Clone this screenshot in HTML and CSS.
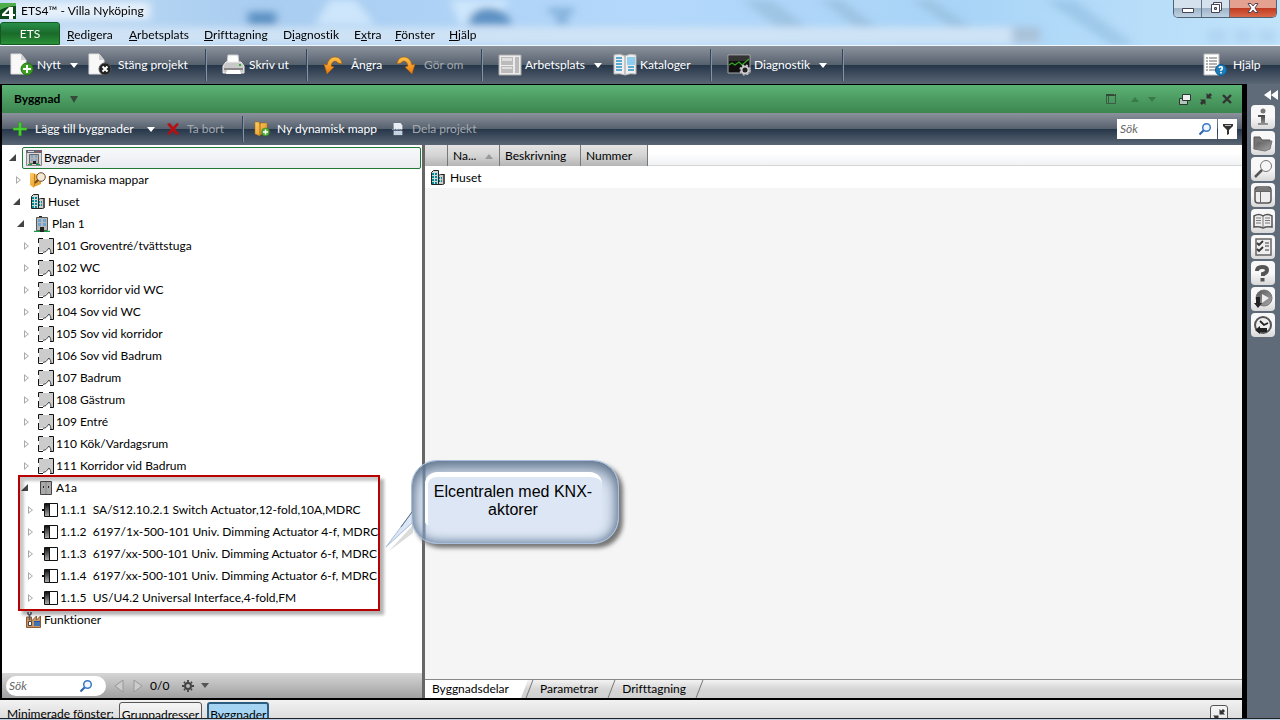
FILE: index.html
```html
<!DOCTYPE html>
<html lang="sv">
<head>
<meta charset="utf-8">
<title>ETS4™ - Villa Nyköping</title>
<link rel="stylesheet" href="styles.css">
</head>
<body>
<svg class="defs" aria-hidden="true">
  <defs>
    <linearGradient id="gOrange" x1="0" y1="0" x2="0" y2="1"><stop offset="0" stop-color="#ffc54a"/><stop offset="1" stop-color="#e8790c"/></linearGradient>
    <linearGradient id="gDark" x1="0" y1="0" x2="0" y2="1"><stop offset="0" stop-color="#444"/><stop offset="1" stop-color="#999"/></linearGradient>
    <linearGradient id="gSteel" x1="0" y1="0" x2="1" y2="1"><stop offset="0" stop-color="#555"/><stop offset="1" stop-color="#aaa"/></linearGradient>
    <linearGradient id="gDevice" x1="0" y1="0" x2="0" y2="1"><stop offset="0" stop-color="#111"/><stop offset="1" stop-color="#aaa"/></linearGradient>
    <linearGradient id="gFolder" x1="0" y1="0" x2="1" y2="1"><stop offset="0" stop-color="#ffcb66"/><stop offset="1" stop-color="#df941c"/></linearGradient>
  </defs>
  <symbol id="logo" viewBox="0 0 16 16"><path fill="#0b4a1c" d="M0 0h16v16H0z"/><path fill="#4fae4c" d="M0 0h16v3Q7 3 0 7z"/><path fill="#fff" fill-rule="evenodd" d="M9 4h4v7h2v2h-2v3H9v-3H2v-2zM9 7l-4 4h4z"/></symbol>
  <symbol id="page-add" viewBox="0 0 24 24"><path fill="#f8f8f8" stroke="#ddd" d="M1 1h10l5 6v14H1z"/><path fill="#cfcfcf" d="M11 1v6h5z"/><circle cx="17" cy="16" r="6" fill="#3c9f22" stroke="#267513"/><path stroke="#fff" stroke-width="2" d="M17 12v8M13 16h8"/></symbol>
  <symbol id="page-close" viewBox="0 0 24 24"><path fill="#f8f8f8" stroke="#ddd" d="M1 1h10l5 6v14H1z"/><path fill="#cfcfcf" d="M11 1v6h5z"/><circle cx="17" cy="16" r="6" fill="#222" stroke="#555"/><path stroke="#fff" stroke-width="2" d="M14.500 13.500l5 5M19.500 13.500l-5 5"/></symbol>
  <symbol id="printer" viewBox="0 0 24 24"><path fill="#fff" stroke="#ccc" d="M6 2h10l1 8H5z"/><path fill="#c9c9c9" stroke="#eee" d="M4 9h15l3 4v7H1v-7z"/><path fill="#888" d="M2 15h19v2H2z"/><path fill="#fff" d="M5 17h13l1 4H4z"/><path fill="#2fae2f" d="M17 11h2v2h-2z"/></symbol>
  <symbol id="undo" viewBox="0 0 20 20"><path fill="url(#gOrange)" stroke="#a85a08" stroke-width=".6" d="M1 9l3 1Q6 2 12 2q6 0 7 7l-4-1q-1-2-3-2-3 0-4 5l3 1-7 7z"/></symbol>
  <symbol id="redo" viewBox="0 0 20 20"><path fill="url(#gOrange)" stroke="#a85a08" stroke-width=".6" d="M19 9l-3 1Q14 2 8 2 2 2 1 9l4-1q1-2 3-2 3 0 4 5l-3 1 7 7z"/></symbol>
  <symbol id="workspace" viewBox="0 0 24 24"><path fill="#ececec" stroke="#aaa" d="M1 2h22v20H1z"/><path fill="#bbb" d="M3 4h12v8H3zM3 13h12v7H3zM17 4h4v16h-4z"/><path fill="#ddd" d="M4 5h10v3H4zM4 14h10v2H4z"/></symbol>
  <symbol id="catalog" viewBox="0 0 24 24"><path fill="#eee" stroke="#bbb" d="M1 2q6-2 11 1 5-3 11-1v19q-6-1-11 1-5-2-11-1z"/><path fill="none" stroke="#2a93c8" stroke-width="1.500" d="M3 5h6M3 8h6M3 11h6M3 14h6M3 17h6M15 14h6M15 17h6"/><path fill="#8ccdf0" d="M14 4h8v8h-8z"/><path stroke="#999" d="M12 3v18"/></symbol>
  <symbol id="diagnostic" viewBox="0 0 24 24"><path fill="#111" stroke="#aaa" d="M1 2h22v18H1z"/><path fill="#333" d="M2 3h20v5H2z"/><path fill="none" stroke="#36a824" stroke-width="1.200" d="M2 12l3-2 3 2 4-3 3 3 7-6"/><circle cx="18" cy="17" r="3.500" fill="#222" stroke="#ccc" stroke-width="2"/><circle cx="18" cy="17" r="5" fill="none" stroke="#ccc" stroke-width="1.200" stroke-dasharray="2 2"/></symbol>
  <symbol id="help" viewBox="0 0 24 24"><path fill="#fff" stroke="#bbb" d="M1 1h15v21H1z"/><path stroke="#999" stroke-width="1.500" stroke-dasharray="2 1 8" d="M3 5h11M3 8h11M3 11h11M3 14h11M3 17h11"/><circle cx="18" cy="17" r="5.500" fill="#1c7dbb" stroke="#0e5b92"/><path fill="none" stroke="#fff" stroke-width="1.500" d="M16 15q1-2 3-1 1 2-1 3v1M18 19v1.500"/></symbol>
  <symbol id="plus" viewBox="0 0 14 14"><path fill="#48d030" stroke="#2c8f1e" stroke-width=".4" d="M5.800 1h2.400v4.800H13v2.400H8.200V13H5.800V8.200H1V5.800h4.800z"/></symbol>
  <symbol id="red-x" viewBox="0 0 14 14"><path fill="#b80f12" d="M1 2l3-1 3 4 4-4 2 1-4 5 4 5-3 1-3-4-4 4-2-1 4-5z"/></symbol>
  <symbol id="folder-add" viewBox="0 0 16 16"><path fill="url(#gFolder)" stroke="#a36a10" stroke-width=".5" d="M1 1h4l1 2V2h7v9l-7 3v1l-5-2z"/><path stroke="#a36a10" d="M6 2v12"/><circle cx="11.500" cy="11" r="4" fill="#54ad35" stroke="#28731a" stroke-width=".5"/><path stroke="#fff" stroke-width="1.500" d="M11.500 8.500v5M9 11h5"/></symbol>
  <symbol id="split" viewBox="0 0 14 16"><path fill="#e9eef5" d="M2 1h8l2 3v4H2z"/><path fill="#c8d3e2" d="M2 10h10v5H2z"/><path fill="none" stroke="#b0bed0" d="M0 8l2 1 2-1 2 1 2-1 2 1 2-1"/></symbol>
  <symbol id="building" viewBox="0 0 16 16"><path fill="#b8b8b8" stroke="#555" d="M2.500 1.500h11v13h-11z"/><path fill="#6aa5d5" d="M4 3h3v3H4zM9 3h3v3H9zM4 7h3v3H4zM9 7h3v3H9z"/><path fill="#222" d="M6 11h4v5H6zM5 0h3v1H5z"/><path stroke="#15a045" stroke-width="1.200" d="M0 15.400h6M10 15.400h6"/></symbol>
  <symbol id="building-window" viewBox="0 0 16 16"><path fill="#d9d9d9" stroke="#888" d="M.5.500h15v15H.5z"/><path fill="#667" d="M0 0h16v3H0z"/><path fill="#d33" d="M13 1h2v1h-2z"/><path fill="#ddd" d="M2 1h6v1H2z"/><path fill="#b5b5b5" stroke="#666" d="M3.500 4.500h9v9h-9z"/><path fill="#7ea9cc" d="M5 5h2v3H5zM9 5h2v3H9zM5 9h2v2H5zM9 9h2v2H9z"/><path fill="#222" d="M7 11h3v3H7z"/><path stroke="#15a045" d="M2 14.500h4M10 14.500h4"/></symbol>
  <symbol id="folder-search" viewBox="0 0 16 16"><path fill="url(#gFolder)" d="M0 1h4l1 1h6v10l-7 3v1l-4-3z"/><path stroke="#c47f14" d="M4.500 2v12"/><circle cx="11" cy="5" r="4.300" fill="#f5ead6" stroke="#704b2b"/><path stroke="#704b2b" stroke-width="2" d="M8 8l-3 3"/></symbol>
  <symbol id="city" viewBox="0 0 16 16"><path fill="#d0d8d8" stroke="#222" d="M1.500 2.500l2-2h5v14h-7z"/><path fill="#ccc" stroke="#222" d="M8.500 5.500l2-1h4v9l-2 1h-4z"/><path fill="#555" d="M13 5h2v8l-2 2z"/><path fill="#078a94" d="M2 3h2v2H2zM5 3h2v2H5zM2 6h2v2H2zM5 6h2v2H5zM2 9h2v2H2zM5 9h2v2H5zM2 12h2v2H2zM5 12h2v2H5zM9 7h1v2H9zM11 7h1v2h-1zM9 10h1v2H9zM11 10h1v2h-1z"/></symbol>
  <symbol id="room" viewBox="0 0 16 16"><path fill="#ccc" d="M1 1h14v14h-2q0-3-2-5L6 14H1z"/><path fill="none" stroke="#111" d="M5 .5H.500V5M.5 9v6.500H5M11 .5h4.500v15H12"/><path fill="none" stroke="#444" d="M5 14.500l3-1 3-3.500q2 2 2 5"/></symbol>
  <symbol id="cabinet" viewBox="0 0 16 16"><path fill="#aaa" stroke="#444" d="M2.500 1.500h11v13h-11z"/><path stroke="#888" d="M8 2v12"/><path fill="#222" d="M5 6h1v2H5zM10 6h1v2h-1z"/></symbol>
  <symbol id="device" viewBox="0 0 16 16"><path fill="#fff" stroke="#111" d="M2.500 1.500h13v13h-13z"/><path fill="url(#gDevice)" d="M3 2h4v12H3z"/><path fill="#111" d="M7 2h1v12H7zM0 7h3v2H0z"/></symbol>
  <symbol id="factory" viewBox="0 0 16 16"><path fill="#c99562" stroke="#8b5c35" d="M.5 15.500V5h5v4l5-5v4l4-4v11.500z"/><path fill="none" stroke="#556" stroke-width="1.500" d="M2 0v2q2 2 3 0V0M3.500 3v5"/><path fill="#fff" stroke="#444" d="M2.500 9.500h3v4h-3z"/><path fill="#1c56a8" d="M8 9h6v5H8z"/><path stroke="#9bc" stroke-width=".6" d="M8 11h6M8 13h6"/></symbol>
  <symbol id="lens" viewBox="0 0 14 14"><circle cx="8.500" cy="5.500" r="3.800" fill="#f2f7ff" stroke="#3978c5" stroke-width="1.500"/><path stroke="#2c61ab" stroke-width="2" d="M5.500 8.500L1.500 12.500"/></symbol>
  <symbol id="funnel" viewBox="0 0 14 14"><path fill="#333" d="M2 2h10v2L8 8v4l-2 1V8L2 4z"/><path fill="#bbb" d="M4 3h6v1H4z"/></symbol>
  <symbol id="gear" viewBox="0 0 14 14"><circle cx="7" cy="7" r="3" fill="none" stroke="#444" stroke-width="2"/><path stroke="#444" stroke-width="1.800" d="M7 1v2M7 11v2M1 7h2M11 7h2M3 3l1 1M10 10l1 1M11 3l-1 1M4 10l-1 1"/></symbol>
  <symbol id="panel" viewBox="0 0 12 12"><path fill="none" stroke="#3d5c46" d="M1.500 1.500h9v9h-9zM3.500 3v7"/><path fill="#304a38" d="M1 1h10v2H1z"/><path fill="#b55" d="M9 1h1v1H9z"/></symbol>
  <symbol id="restore" viewBox="0 0 12 12"><path fill="#b6c5b9" stroke="#2a3a2e" d="M.5 5.500h8v6h-8z"/><path fill="#eee" stroke="#2a3a2e" d="M3.500 1.500h8v6h-8z"/></symbol>
  <symbol id="shrink" viewBox="0 0 12 12"><path fill="#333" d="M6.500 0v5.500H12L10.300 3.800 12 2 10 0 8.200 1.700zM5.500 12V6.500H0l1.700 1.700L0 10l2 2 1.800-1.700z"/></symbol>
  <symbol id="cross" viewBox="0 0 12 12"><path stroke="#333" stroke-width="2.400" d="M2 2l8 8M10 2l-8 8"/></symbol>
  <symbol id="info" viewBox="0 0 20 20"><circle cx="10" cy="4" r="2.500" fill="#777"/><path fill="url(#gDark)" d="M5 8h7v8h3v2H5v-2h3v-6H5z"/></symbol>
  <symbol id="folder" viewBox="0 0 20 20"><path fill="#777" stroke="#555" d="M1 16V4h6l2 3h8v2"/><path fill="url(#gSteel)" stroke="#777" d="M1 16l3-7 15-1-2 8-5 2z"/></symbol>
  <symbol id="magnifier" viewBox="0 0 20 20"><circle cx="13" cy="7" r="5.500" fill="#f6f6f6" stroke="#777"/><path stroke="#555" stroke-width="2.500" d="M9 11l-7 7"/></symbol>
  <symbol id="window" viewBox="0 0 20 20"><rect x="2" y="2" width="16" height="16" rx="3" fill="#eee" stroke="#555" stroke-width="1.500"/><path fill="#777" d="M3 3h14v3H3z"/><path stroke="#666" d="M7.500 6v12M2 6.500h16"/></symbol>
  <symbol id="book" viewBox="0 0 20 20"><path fill="#eee" stroke="#555" stroke-width="1.500" d="M1 5q5-3 9 0 4-3 9 0v11q-5-1-9 1-4-2-9-1z"/><path stroke="#777" d="M10 5v12M3 7h5M3 9.500h5M3 12h5M12 7h5M12 9.500h5M12 12h5"/></symbol>
  <symbol id="checklist" viewBox="0 0 20 20"><path fill="#eee" stroke="#666" stroke-width="1.500" d="M3 2h15v16H3z"/><path fill="none" stroke="#333" stroke-width="1.800" d="M4 6l2 2 4-4M4 12l2 2 4-4"/><path stroke="#777" stroke-width="1.500" d="M12 6h4M12 9h4M12 13h4"/></symbol>
  <symbol id="question" viewBox="0 0 20 20"><path fill="none" stroke="#555" stroke-width="4" d="M4 8q0-4 5-4t5 3q0 3-4 4v2M9.500 15v3.500"/></symbol>
  <symbol id="play-down" viewBox="0 0 20 20"><circle cx="11" cy="9" r="8" fill="url(#gSteel)" stroke="#777"/><path fill="#eee" d="M9 5l7 4-7 5z"/><path fill="#222" d="M3 8h4v6h2l-4 5-4-5h2z"/></symbol>
  <symbol id="history" viewBox="0 0 20 20"><circle cx="10" cy="10" r="8" fill="#eee" stroke="#555" stroke-width="2"/><path fill="none" stroke="#222" stroke-width="1.800" d="M7 6l4 4 4-2"/><path fill="#222" d="M2 15l5-4v2h7v4H7v2z"/></symbol>
</svg>

<header class="glass">
  <svg class="glass-art" viewBox="0 0 1280 46" preserveAspectRatio="none" aria-hidden="true">
    <defs><filter id="soft"><feGaussianBlur stdDeviation="4"/></filter></defs>
    <g filter="url(#soft)">
      <path fill="#8fb3cf" opacity=".5" d="M742 0h30l36 28h-30zM820 0h22l36 28h-22zM912 0h20l40 28h-20z"/>
      <path fill="#8cb8dc" opacity=".5" d="M1045 0h30l60 46h-24z"/>
      <path fill="#dcefff" opacity=".7" d="M330 0h25l20 25h-60zM450 0h60l-20 25h-30z"/>
      <path fill="#5f93c4" d="M248 12h28v14h-28zM468 26q2-18 20-18t24 18z"/>
      <path fill="#86b2dc" d="M548 8h26v6h-26zM556 14h12v12h-12z"/>
      <path fill="#d3e4f5" opacity=".9" d="M60 28h980v18H60z"/>
      <path fill="#a9c2da" d="M1012 28h28v16h-28z"/>
      <path fill="#a9cdee" d="M1208 30h18v14h-18zM1234 30h18v14h-18zM1258 30h18v14h-18z" opacity=".6"/>
      <path fill="#e5f0fa" d="M10 2h140v18H10z"/>
    </g>
  </svg>
  <div class="titlebar">
    <svg class="i16"><use href="#logo"/></svg>
    <h1 class="title">ETS4™ - Villa Nyköping</h1>
    <div class="win-buttons">
      <button class="win" aria-label="Minimera"><svg viewBox="0 0 16 16" class="i16"><path fill="#fff" stroke="#445" d="M2.500 8.500h11v4h-11z"/></svg></button>
      <button class="win" aria-label="Återställ"><svg viewBox="0 0 16 16" class="i16"><path fill="#fff" stroke="#445" d="M5.500 2.500h8v8h-8z"/><path fill="#fff" stroke="#445" d="M3.500 4.500h8v8h-8z"/><path fill="#9bb" stroke="#445" d="M6.500 7.500h2v2h-2z"/></svg></button>
      <button class="win win-close" aria-label="Stäng"><svg viewBox="0 0 16 16" class="i16"><path fill="#fff" stroke="#545" d="M3 3.500h3l2 2.500 2-2.500h3L10 8l3 4.500h-3L8 10l-2 2.500H3L6 8z"/></svg></button>
    </div>
  </div>
  <nav class="menubar">
    <button class="ets">ETS</button>
    <button><u>R</u>edigera</button>
    <button><u>A</u>rbetsplats</button>
    <button><u>D</u>rifttagning</button>
    <button>D<u>i</u>agnostik</button>
    <button>E<u>x</u>tra</button>
    <button><u>F</u>önster</button>
    <button><u>H</u>jälp</button>
  </nav>
</header>

<div class="toolbar main-toolbar">
  <button><svg class="i24"><use href="#page-add"/></svg>Nytt<i class="drop"></i></button>
  <button><svg class="i24"><use href="#page-close"/></svg>Stäng projekt</button>
  <button class="ruled"><svg class="i24"><use href="#printer"/></svg>Skriv ut</button>
  <button class="ruled"><svg class="i20"><use href="#undo"/></svg>Ångra</button>
  <button class="off"><svg class="i20"><use href="#redo"/></svg>Gör om</button>
  <button class="ruled tight"><svg class="i24"><use href="#workspace"/></svg>Arbetsplats<i class="drop"></i></button>
  <button><svg class="i24"><use href="#catalog"/></svg>Kataloger</button>
  <button class="ruled tight"><svg class="i24"><use href="#diagnostic"/></svg>Diagnostik<i class="drop"></i></button>
  <span class="ruled"></span>
  <button><svg class="i24"><use href="#help"/></svg>Hjälp</button>
</div>

<div class="body">
  <main class="workspace">
    <section class="window">
      <header class="window-head">
        <h2>Byggnad</h2><i class="drop dark"></i>
        <div class="head-tools">
          <svg class="i12"><use href="#panel"/></svg>
          <i class="up faint"></i><i class="drop faint"></i>
          <button aria-label="Lösgör"><svg class="i12"><use href="#restore"/></svg></button>
          <button aria-label="Minimera"><svg class="i12"><use href="#shrink"/></svg></button>
          <button aria-label="Stäng"><svg class="i12"><use href="#cross"/></svg></button>
        </div>
      </header>
      <div class="toolbar sub-toolbar">
        <button><svg class="i16"><use href="#plus"/></svg>Lägg till byggnader<i class="drop"></i></button>
        <button class="off"><svg class="i14"><use href="#red-x"/></svg>Ta bort</button>
        <button class="ruled"><svg class="i16"><use href="#folder-add"/></svg>Ny dynamisk mapp</button>
        <button class="off"><svg class="i14"><use href="#split"/></svg>Dela projekt</button>
        <div class="filter">
          <label class="search"><input type="text" placeholder="Sök" aria-label="Sök"><svg class="i14"><use href="#lens"/></svg></label>
          <button class="funnel" aria-label="Filter"><svg class="i14"><use href="#funnel"/></svg></button>
        </div>
      </div>
      <div class="panes">
        <div class="left">
          <ul class="tree">
            <li>
              <div class="row"><i class="open"></i><span class="label selected"><svg class="i16"><use href="#building-window"/></svg>Byggnader</span></div>
              <ul>
                <li><div class="row"><i class="shut"></i><span class="label"><svg class="i16"><use href="#folder-search"/></svg>Dynamiska mappar</span></div></li>
                <li>
                  <div class="row"><i class="open"></i><span class="label"><svg class="i16"><use href="#city"/></svg>Huset</span></div>
                  <ul>
                    <li>
                      <div class="row"><i class="open"></i><span class="label"><svg class="i16"><use href="#building"/></svg>Plan 1</span></div>
                      <ul>
                        <li><div class="row"><i class="shut"></i><span class="label"><svg class="i16"><use href="#room"/></svg>101 Groventré/tvättstuga</span></div></li>
                        <li><div class="row"><i class="shut"></i><span class="label"><svg class="i16"><use href="#room"/></svg>102 WC</span></div></li>
                        <li><div class="row"><i class="shut"></i><span class="label"><svg class="i16"><use href="#room"/></svg>103 korridor vid WC</span></div></li>
                        <li><div class="row"><i class="shut"></i><span class="label"><svg class="i16"><use href="#room"/></svg>104 Sov vid WC</span></div></li>
                        <li><div class="row"><i class="shut"></i><span class="label"><svg class="i16"><use href="#room"/></svg>105 Sov vid korridor</span></div></li>
                        <li><div class="row"><i class="shut"></i><span class="label"><svg class="i16"><use href="#room"/></svg>106 Sov vid Badrum</span></div></li>
                        <li><div class="row"><i class="shut"></i><span class="label"><svg class="i16"><use href="#room"/></svg>107 Badrum</span></div></li>
                        <li><div class="row"><i class="shut"></i><span class="label"><svg class="i16"><use href="#room"/></svg>108 Gästrum</span></div></li>
                        <li><div class="row"><i class="shut"></i><span class="label"><svg class="i16"><use href="#room"/></svg>109 Entré</span></div></li>
                        <li><div class="row"><i class="shut"></i><span class="label"><svg class="i16"><use href="#room"/></svg>110 Kök/Vardagsrum</span></div></li>
                        <li><div class="row"><i class="shut"></i><span class="label"><svg class="i16"><use href="#room"/></svg>111 Korridor vid Badrum</span></div></li>
                        <li class="marked">
                          <div class="row"><i class="open"></i><span class="label"><svg class="i16"><use href="#cabinet"/></svg>A1a</span></div>
                          <ul>
                            <li><div class="row"><i class="shut"></i><span class="label"><svg class="i16"><use href="#device"/></svg>1.1.1&nbsp; SA/S12.10.2.1 Switch Actuator,12-fold,10A,MDRC</span></div></li>
                            <li><div class="row"><i class="shut"></i><span class="label"><svg class="i16"><use href="#device"/></svg>1.1.2&nbsp; 6197/1x-500-101 Univ. Dimming Actuator 4-f, MDRC</span></div></li>
                            <li><div class="row"><i class="shut"></i><span class="label"><svg class="i16"><use href="#device"/></svg>1.1.3&nbsp; 6197/xx-500-101 Univ. Dimming Actuator 6-f, MDRC</span></div></li>
                            <li><div class="row"><i class="shut"></i><span class="label"><svg class="i16"><use href="#device"/></svg>1.1.4&nbsp; 6197/xx-500-101 Univ. Dimming Actuator 6-f, MDRC</span></div></li>
                            <li><div class="row"><i class="shut"></i><span class="label"><svg class="i16"><use href="#device"/></svg>1.1.5&nbsp; US/U4.2 Universal Interface,4-fold,FM</span></div></li>
                          </ul>
                        </li>
                      </ul>
                    </li>
                  </ul>
                </li>
              </ul>
            </li>
            <li><div class="row"><i></i><span class="label"><svg class="i16"><use href="#factory"/></svg>Funktioner</span></div></li>
          </ul>
          <div class="find">
            <label class="search round"><input type="text" placeholder="Sök" aria-label="Sök i trädet"><svg class="i14"><use href="#lens"/></svg></label>
            <button aria-label="Föregående"><svg class="i14" viewBox="0 0 14 14"><path fill="#ccc" stroke="#999" d="M11 1v12L3 7z"/></svg></button>
            <button aria-label="Nästa"><svg class="i14" viewBox="0 0 14 14"><path fill="#ccc" stroke="#999" d="M3 1v12l8-6z"/></svg></button>
            <span class="count">0/0</span>
            <button class="options" aria-label="Alternativ"><svg class="i14"><use href="#gear"/></svg><i class="drop grey"></i></button>
          </div>
        </div>
        <div class="right">
          <table>
            <thead><tr><th class="c-icon"></th><th class="c-name">Na...<i class="up sort"></i></th><th class="c-desc">Beskrivning</th><th class="c-num">Nummer</th><th class="c-rest"></th></tr></thead>
            <tbody><tr><td colspan="5"><span class="cell"><svg class="i16"><use href="#city"/></svg>Huset</span></td></tr></tbody>
          </table>
          <div class="tabs">
            <button class="tab active">Byggnadsdelar</button>
            <button class="tab">Parametrar</button>
            <button class="tab">Drifttagning</button>
          </div>
        </div>
        <div class="callout">
          <svg class="tail" viewBox="0 0 28 40" aria-hidden="true"><path fill="#888" opacity=".3" d="M4 40L28 14v8z"/><path fill="#dce6f4" stroke="#a9bedb" d="M1 36L27 1v11z"/><path stroke="#5b7088" d="M16 16L27 1"/></svg>
          <p>Elcentralen med KNX-aktorer</p>
        </div>
      </div>
    </section>
    <footer class="minimized">
      <span>Minimerade fönster:</span>
      <button>Gruppadresser</button>
      <button class="current">Byggnader</button>
      <button class="collapse" aria-label="Minimera alla"><svg class="i12"><use href="#shrink"/></svg></button>
    </footer>
  </main>
  <aside class="sidebar">
    <button class="expand" aria-label="Visa"><svg class="i14" viewBox="0 0 14 14"><path fill="#fff" d="M7 2v10L0 7zM14 2v10L7 7z"/></svg></button>
    <button aria-label="Information"><svg class="i20"><use href="#info"/></svg></button>
    <button aria-label="Mapp"><svg class="i20"><use href="#folder"/></svg></button>
    <button aria-label="Sök"><svg class="i20"><use href="#magnifier"/></svg></button>
    <button aria-label="Arbetsytor"><svg class="i20"><use href="#window"/></svg></button>
    <button aria-label="Katalog"><svg class="i20"><use href="#book"/></svg></button>
    <button aria-label="Att göra"><svg class="i20"><use href="#checklist"/></svg></button>
    <button aria-label="Hjälp"><svg class="i20"><use href="#question"/></svg></button>
    <button aria-label="Pågående"><svg class="i20"><use href="#play-down"/></svg></button>
    <button aria-label="Historik"><svg class="i20"><use href="#history"/></svg></button>
  </aside>
</div>
<div class="desk-edge"></div>
</body>
</html>
```
FILE: styles.css
```css
*, *::before, *::after { box-sizing: border-box; }
body {
  margin: 0;
  height: 100vh;
  display: flex;
  flex-direction: column;
  overflow: hidden;
  background: #5f6b78;
  color: #000;
  font: 12px/16px Lato, "Open Sans", sans-serif;
  font-variant-ligatures: none;
  white-space: nowrap;
}
button, input { font: inherit; color: inherit; font-variant-ligatures: none; }
button { margin: 0; padding: 0; border: 0; background: none; }
h1, h2, p, ul { margin: 0; padding: 0; font: inherit; font-variant-ligatures: none; list-style: none; }
svg { display: block; flex: none; }
.defs { position: absolute; width: 0; height: 0; }
.i12 { width: 12px; height: 12px; }
.i14 { width: 14px; height: 14px; }
.i16 { width: 16px; height: 16px; }
.i20 { width: 20px; height: 20px; }
.i24 { width: 24px; height: 24px; }

.drop, .up { border: 4px solid transparent; flex: none; }
.drop { border-top: 5px solid #fff; border-bottom: 0; }
.up { border-bottom: 5px solid #999; border-top: 0; }
.drop.dark { border-top: 7px solid #354a3b; }
.drop.grey { border-top-color: #555; }
.drop.faint { border-top-color: #397a49; }
.up.faint { border-bottom-color: #397a49; }

/* window frame */
.glass { position: relative; flex: none; background: linear-gradient(90deg, #c3ddf5, #a9cdf0 20%, #b4d8fb 50%, #a9d4f7 75%, #c2e4fb); border-bottom: 1px solid #f2f8ff; }
.glass-art { position: absolute; width: 100%; height: 100%; }
.titlebar { position: relative; display: flex; align-items: flex-start; height: 22px; padding-right: 3px; }
.titlebar > .i16 { margin-top: 3px; }
.title { flex: 1; padding: 3px 5px; }
.win-buttons { display: flex; border: 1px solid #4f6274; border-top: 0; border-radius: 0 0 5px 5px; overflow: hidden; }
.win { display: flex; justify-content: center; width: 28px; height: 17px; background: linear-gradient(#d5e2ee 45%, #a0b4c8 50%, #bed2e4); border-right: 1px solid #607386; }
.win-close { width: 46px; border: 0; background: linear-gradient(#e5a190 45%, #c13c22 50%, #d9684a); }
.menubar { position: relative; display: grid; grid-template-columns: 60px 69px 75px 79px 71px 41px 54px 40px; height: 23px; align-items: center; }
.menubar button { height: 100%; padding-top: 2px; text-align: left; }
.menubar button:nth-child(2) { padding-left: 7px; }
.menubar .ets { padding: 0; color: #fff; text-align: center; background: linear-gradient(#28904a, #1a6a2a 50%, #2a9038); border: 1px solid #145a22; border-radius: 3px 3px 0 0; }

/* toolbars */
.toolbar { display: grid; flex: none; color: #fff; background: linear-gradient(#8b929c, #56616e 50%, #27374a 51%, #5a6674); }
.toolbar button { display: flex; align-items: center; gap: 3px; text-align: left; }
.toolbar .drop { margin-left: 6px; }
.toolbar .off { color: #a3a8ae; }
.ruled { position: relative; }
.ruled::before { content: ""; position: absolute; left: -17px; top: 3px; bottom: 3px; width: 2px; background: linear-gradient(90deg, #35465a 50%, #8392a4 50%); }
.main-toolbar { height: 38px; padding-left: 10px; grid-template-columns: 78px 134px 101px 73px 102px 115px 114px 132px 1fr 77px; }
.main-toolbar .i20 { margin-right: 5px; }
.main-toolbar button:nth-child(2) { gap: 6px; }
.main-toolbar button:last-child { gap: 6px; }
.sub-toolbar { height: 32px; padding: 0 10px; grid-template-columns: 154px 88px 137px 100px 1fr; }
.sub-toolbar button { gap: 7px; }
.sub-toolbar .ruled::before { left: -12px; }

.body { display: flex; flex: 1; min-height: 0; }
.workspace { display: flex; flex: 1; flex-direction: column; min-width: 0; background: #efefef; border-right: 5px solid #000; }
.window { display: flex; flex: 1; flex-direction: column; min-height: 0; border: solid #000; border-width: 1px 0 2px 2px; }
.window-head { display: flex; align-items: center; flex: none; height: 28px; padding: 0 9px 0 12px; gap: 10px; background: linear-gradient(#5cb274, #3c8650); }
.window-head h2 { font-weight: 700; }
.head-tools { display: flex; align-items: center; gap: 9px; margin-left: auto; }
.head-tools .up { margin-left: 5px; }
.head-tools .faint + button { margin-left: 14px; }
.filter { display: flex; justify-content: flex-end; align-items: center; gap: 1px; margin-right: -5px; }
.search { display: flex; align-items: center; height: 20px; width: 100px; padding: 0 5px 0 3px; background: #fff; color: #777; }
.search input { flex: 1; min-width: 0; padding: 0; border: 0; outline: 0; background: none; font-style: italic; }
.search input::placeholder { color: #666; opacity: 1; }
.toolbar .funnel { justify-content: center; width: 19px; height: 20px; background: #fff; }

/* tree */
.panes { position: relative; display: flex; flex: 1; min-height: 0; }
.left { display: flex; flex-direction: column; width: 423px; border-right: 3px solid #666; background: #fff; flex: none; }
.tree { flex: 1; padding: 2px 1px 0 6px; }
.tree ul { padding-left: 4px; }
.row { display: flex; align-items: center; height: 22px; }
.row > i { width: 14px; height: 10px; flex: none; }
.row > .open::before { content: ""; display: block; width: 7px; height: 7px; margin: 1px 0 0 1px; background: #444; clip-path: polygon(100% 0, 100% 100%, 0 100%); }
.row > .shut::before { content: ""; display: block; margin: 1px 0 0 4px; width: 5px; height: 8px; background: #aaa; clip-path: polygon(0 0, 100% 50%, 0 100%, 0 0, 20% 25%, 20% 75%, 75% 50%, 20% 25%); }
.label { display: flex; align-items: center; flex: 1; gap: 2px; height: 22px; padding-left: 3px; border: 1px solid transparent; border-radius: 2px; }
.selected { border-color: #1f7a35; background: linear-gradient(#f8f9fb, #e9ecf0); }
.marked { position: relative; }
.marked::after { content: ""; position: absolute; left: -2px; top: -2px; width: 362px; bottom: -2px; border: 2px solid #b80000; box-shadow: 4px 4px 3px rgba(0,0,0,.3), inset 4px 4px 3px rgba(0,0,0,.22); pointer-events: none; }
.find { display: flex; align-items: center; height: 25px; padding-left: 4px; background: linear-gradient(#d6d6d6, #a0a0a0); }
.round { border-radius: 10px; padding: 0 13px 0 3px; }
.find button { margin-left: 5px; }
.find .round + button { margin-left: 6px; }
.count { margin-left: 5px; }
.find .options { display: flex; align-items: center; gap: 6px; margin-left: 12px; }

/* list */
.right { display: flex; flex: 1; flex-direction: column; min-width: 0; background: #f5f5f5; }
table { width: 100%; border-spacing: 0; table-layout: fixed; }
th { height: 21px; padding: 0 5px; font-weight: 400; text-align: left; background: linear-gradient(#e4e4e4, #d4d4d4 50%, #b5b5b5); border-right: 1px solid #777; }
.c-icon { width: 23px; }
.c-name { width: 52px; }
.c-desc { width: 81px; }
.c-num { width: 67px; }
.c-rest { background: linear-gradient(#fff 40%, #f0f2f4); border-right: 0; border-bottom: 1px solid #d5d5d5; }
.sort { display: inline-block; margin-left: 9px; vertical-align: 1px; }
td { height: 22px; padding: 1px 5px 0; background: #fff; }
.cell { display: flex; align-items: center; gap: 4px; }
.tabs { display: flex; margin-top: auto; height: 19px; border-top: 1px solid #888; background: linear-gradient(#f3f3f3, #d6d6d6 50%, #d0d0d0); }
.tab { position: relative; padding: 0 13px 0 11px; }
.tab::after { content: ""; position: absolute; right: -1px; top: 0; bottom: 0; width: 1px; background: #777; transform: skewX(-21deg); }
.tab.active { padding: 0 20px 0 7px; background: linear-gradient(111deg, #fff calc(100% - 8px), transparent calc(100% - 7px)); }

/* annotation bubble */
.callout { position: absolute; left: 409px; top: 315px; width: 208px; height: 84px; padding: 22px 18px 0 14px; border: 1px solid #a9bfdd; border-radius: 26px; background: linear-gradient(90deg, transparent 10px, #7d8fa6 11px, #7d8fa6 13px, transparent 14px), #dce6f4; box-shadow: inset 0 7px 16px #5b7088, inset 0 -2px 10px #8298b4, 4px 4px 4px #777; font: 16px/18px "Liberation Sans", Arial, sans-serif; text-align: center; white-space: normal; }
.callout::before { content: ""; position: absolute; inset: 11px 16px 18px 13px; border: solid #fff; border-width: 5px 0 0 3px; border-radius: 12px 12px 6px 4px; background: #dce6f4; }
.callout p { position: relative; }
.tail { position: absolute; left: -27px; top: 50px; width: 28px; height: 40px; }

.minimized { display: flex; flex: none; align-items: flex-start; gap: 5px; height: 18px; padding: 2px 14px 0 7px; overflow: hidden; background: linear-gradient(#f2f2f2, #ddd); }
.minimized span, .minimized button { height: 26px; line-height: 24px; }
.minimized button { padding: 0 2px; border: 1px solid #555; border-radius: 3px; background: linear-gradient(#f5f5f5, #ddd); }
.minimized .current { background: #a5d4f2; border: 2px solid #2b5d80; line-height: 22px; padding: 0 1px; }
.minimized .collapse { display: flex; margin: 3px 0 0 auto; padding: 3px 2px; }

.sidebar { display: flex; flex-direction: column; gap: 2px; width: 33px; flex: none; padding: 2px 0 0 4px; background: #5f6b78; }
.sidebar button { display: flex; align-items: center; justify-content: center; width: 24px; height: 24px; border-radius: 4px; background: linear-gradient(#f8f8f8 50%, #d8d8d8); }
.sidebar .expand { height: 17px; width: 27px; justify-content: flex-end; background: none; }
.desk-edge { flex: none; height: 2px; background: #b9cde2; border-top: 1px solid #222; }
```
